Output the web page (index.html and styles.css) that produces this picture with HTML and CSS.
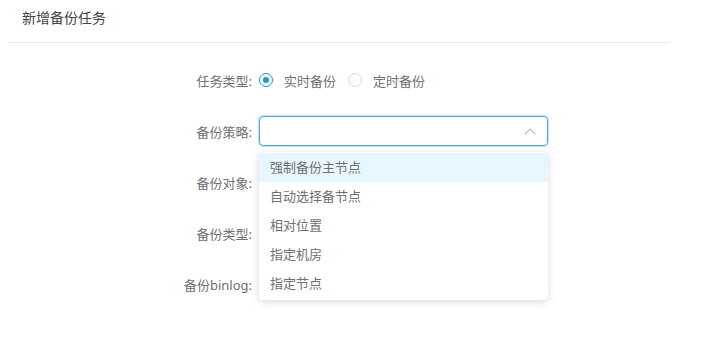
FILE: index.html
```html
<!DOCTYPE html>
<html lang="zh-CN">

<head>
    <meta charset="UTF-8">
    <title>新增备份任务</title>
    <link rel="stylesheet" href="styles.css">
</head>

<body>
    <div class="page">
        <!-- Header -->
        <div class="page-header">新增备份任务</div>

        <!-- Form -->
        <div class="form">
            <div class="form-row">
                <label class="form-label">任务类型:</label>
                <div class="form-control radio-group">
                    <span class="radio checked"><span class="radio-dot"></span>实时备份</span>
                    <span class="radio"><span class="radio-dot"></span>定时备份</span>
                </div>
            </div>

            <div class="form-row">
                <label class="form-label">备份策略:</label>
                <div class="form-control select-wrap">
                    <div class="select">
                        <svg class="select-arrow" width="12" height="8" viewBox="0 0 12 8">
                            <path d="M1 7 L6 2 L11 7" fill="none" stroke="#bfbfbf" stroke-width="1.2"/>
                        </svg>
                    </div>
                    <ul class="dropdown">
                        <li class="active">强制备份主节点</li>
                        <li>自动选择备节点</li>
                        <li>相对位置</li>
                        <li>指定机房</li>
                        <li>指定节点</li>
                    </ul>
                </div>
            </div>

            <div class="form-row">
                <label class="form-label">备份对象:</label>
                <div class="form-control"></div>
            </div>

            <div class="form-row">
                <label class="form-label">备份类型:</label>
                <div class="form-control"></div>
            </div>

            <div class="form-row">
                <label class="form-label">备份binlog:</label>
                <div class="form-control"></div>
            </div>
        </div>
    </div>
</body>

</html>
```

FILE: styles.css
```css
body {
    margin: 0;
    background-color: #ffffff;
    font-family: 'Noto Sans', 'Noto Sans CJK SC', sans-serif;
    font-size: 13px;
    color: #707070;
}

.page {
    width: 661px;
    margin-left: 9px;
}

.page-header {
    height: 42px;
    padding: 0 0 0 13px;
    line-height: 36px;
    font-size: 14px;
    color: #444444;
    border-bottom: 1px solid #ebebeb;
}

.form {
    padding-top: 22px;
}

.form-row {
    display: flex;
    align-items: center;
    height: 30px;
    margin-bottom: 21px;
}

.form-label {
    width: 243px;
    padding-right: 7px;
    text-align: right;
    color: #707070;
}

.form-control {
    flex: 1;
}

/* Radio buttons */
.radio-group {
    display: flex;
    align-items: center;
    gap: 12px;
}

.radio {
    display: flex;
    align-items: center;
    gap: 11px;
    color: #707070;
}

.radio-dot {
    box-sizing: border-box;
    width: 14px;
    height: 14px;
    border: 1px solid #dcdcdc;
    border-radius: 50%;
    position: relative;
}

.radio.checked .radio-dot {
    border-color: #1890ff;
}

.radio.checked .radio-dot::after {
    content: '';
    position: absolute;
    top: 3px;
    left: 3px;
    width: 6px;
    height: 6px;
    border-radius: 50%;
    background-color: #1890ff;
}

/* Select with open dropdown */
.select-wrap {
    position: relative;
}

.select {
    box-sizing: border-box;
    width: 289px;
    height: 30px;
    border: 1px solid #40a9ff;
    border-radius: 4px;
    box-shadow: 0 0 0 1px rgba(24, 144, 255, 0.25);
    display: flex;
    align-items: center;
    justify-content: flex-end;
    padding-right: 11px;
}

.dropdown {
    position: absolute;
    top: 36px;
    left: 0;
    width: 289px;
    margin: 0;
    padding: 1px 0 2px;
    list-style: none;
    background-color: #ffffff;
    border-radius: 4px;
    box-shadow: 0 2px 8px rgba(0, 0, 0, 0.15);
    z-index: 10;
}

.dropdown li {
    height: 29px;
    line-height: 29px;
    padding: 0 11px;
    color: #707070;
}

.dropdown li.active {
    background-color: #e6f7ff;
}
```
